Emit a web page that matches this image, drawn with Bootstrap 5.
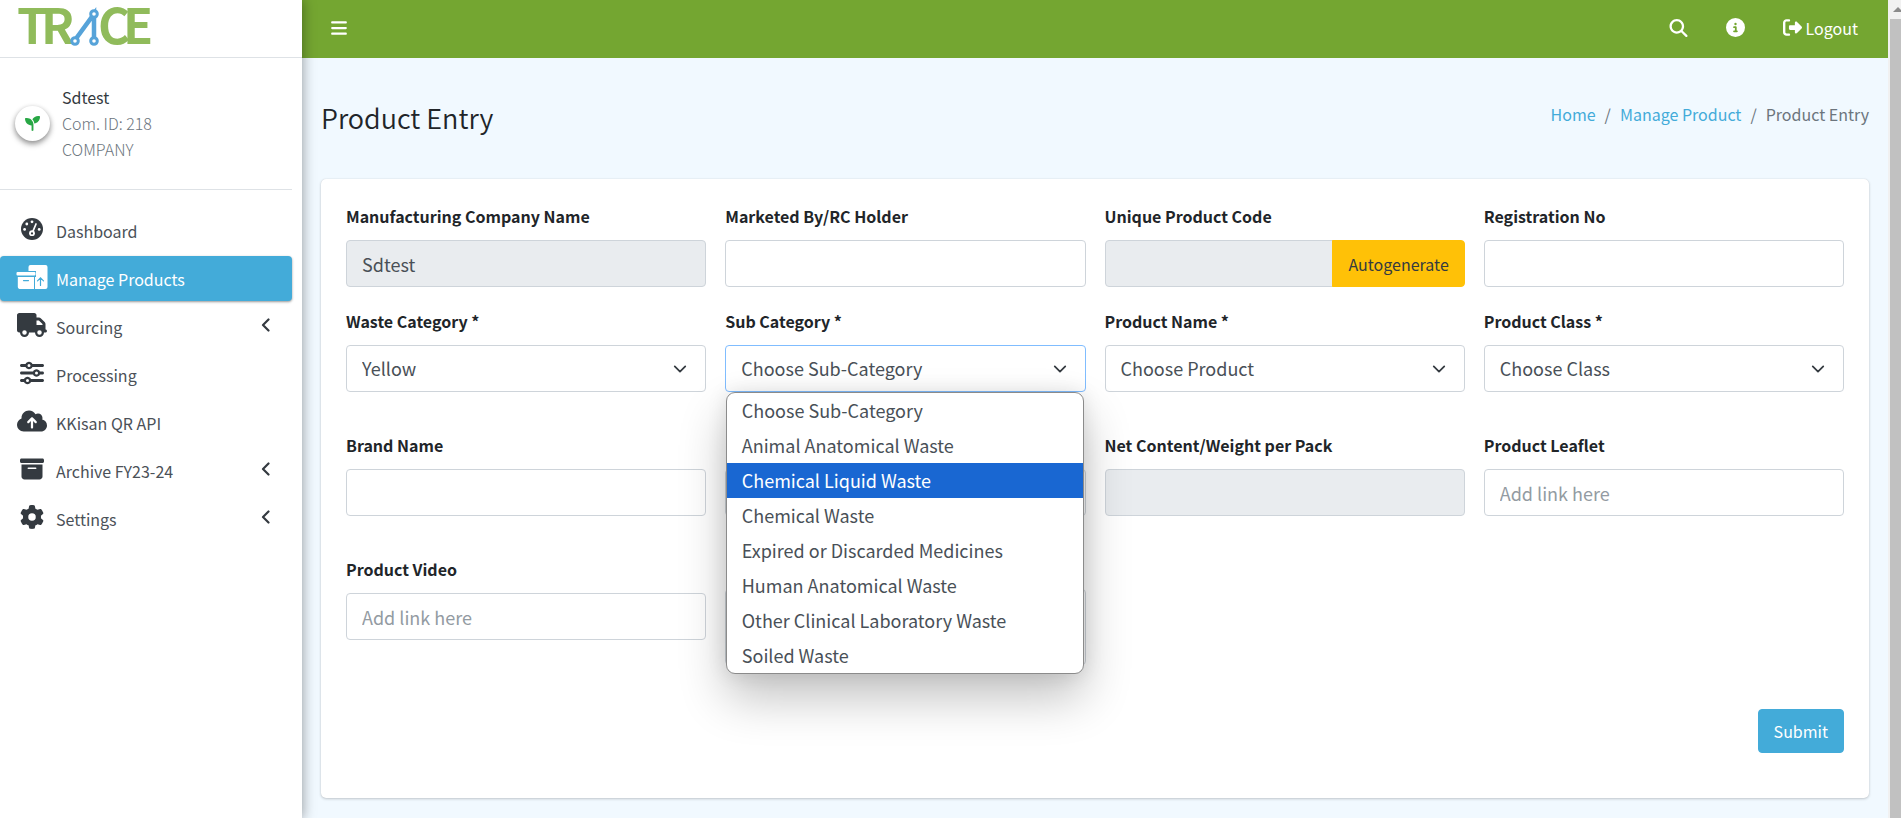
<!DOCTYPE html>
<html lang="en">
<head>
<meta charset="utf-8">
<meta name="viewport" content="width=device-width, initial-scale=1">
<title>Product Entry</title>
<link href="https://cdn.jsdelivr.net/npm/bootstrap@5.3.0/dist/css/bootstrap.min.css" rel="stylesheet">
<style>
  :root { --brand-blue: #43abd9; --brand-green: #74a631; }
  body { font-family: "Noto Sans CJK SC", "Open Sans", sans-serif; font-size: 16px; line-height: 26px; color: #212529; background: #f1f9ff; }
  svg { fill: currentColor; flex: none; }
  a { text-decoration: none; }

  .app-side { width: 302px; flex: none; background: #fff; box-shadow: 1px 0 12px rgba(0,0,0,.36); clip-path: inset(0 -20px 0 0); z-index: 3; color: #343a40; }
  .app-brand { height: 58px; padding: 0 16px; border-bottom: 1px solid #dee2e6; }
  .user-panel { margin: 26px 10px 0 0; padding: 0 0 27px 15px; border-bottom: 1px solid #dee2e6; }
  .user-text { font-weight: 300; color: #6c757d; }
  .avatar { width: 35px; height: 35px; color: #28a745; box-shadow: 0 3px 6px rgba(0,0,0,.3), 0 2px 5px rgba(0,0,0,.22); }
  .side-menu { margin: 18px 10px 0 0; gap: 3px; }
  .side-menu .nav-link { height: 45px; padding: 0 22px 0 16px; color: #4b5158; border-radius: 4px; }
  .side-menu .nav-link > svg { color: #343a40; margin-bottom: 3px; }
  .side-menu .nav-link .glyph { width: 32px; }
  .side-menu .active { background: var(--brand-blue); color: #fff; box-shadow: 0 1px 3px rgba(0,0,0,.24), 0 1px 2px rgba(0,0,0,.2); }
  .side-menu .nav-link.active, .side-menu .nav-link.active > svg { color: #fff; }

  .top-bar { height: 58px; background: var(--brand-green); padding: 0 30px 3px 28px; }
  .top-bar a, .top-bar button { color: #fff; }
  .top-links { gap: 38px; }
  .page-head { padding: 41px 19px 0 19px; height: 121px; }
  .page-head h1 { font-size: 27px; line-height: 38px; font-weight: 350; }
  .breadcrumb { --bs-breadcrumb-item-padding-x: 9px; --bs-breadcrumb-divider-color: #6c757d; line-height: 30px; }
  .breadcrumb a { color: var(--brand-blue); }
  .breadcrumb .active { color: #6c757d; }

  .entry-card { margin: 0 19px 21px; padding: 25px 25px 45px; background: #fff; border-radius: 5px; box-shadow: 0 0 1px rgba(0,0,0,.13), 0 1px 3px rgba(0,0,0,.2); }
  .entry-row { --bs-gutter-x: 19px; }
  .entry-card .form-label { display: block; font-weight: 700; line-height: 24px; margin-bottom: 12px; }
  .entry-card .form-control, .entry-card .form-select { height: 47px; padding: 8px 15px; font-size: 18px; line-height: 30px; color: #495057; border-color: #ced4da; border-radius: 4px; box-shadow: none; }
  .entry-card .form-control:disabled, .entry-card .form-control[readonly] { background: #e9ecef; }
  .entry-card .form-control::placeholder { color: #939ba2; }
  .entry-card .form-select { background-position: right 17px center; background-size: 16px 14px; padding-top: 7px; }
  .entry-card .form-select.is-open { border-color: #80bdff; }
  .entry-card .input-group .form-control { border-radius: 4px 0 0 4px; }
  .entry-card textarea.form-control { height: 76px; }
  .gap-row { margin-top: 22px; }
  .gap-wide { margin-top: 41px; }
  .btn { font-size: 16px; line-height: 26px; border-radius: 4px; }
  .btn-auto { background: #ffc107; color: #343a40; padding: 8px 15px; border: 1px solid #ffc107; }
  .btn-send, .btn-send:hover { background: var(--brand-blue); border-color: var(--brand-blue); color: #fff; padding: 8px 15px; }
  .actions { margin-top: 44px; }

  .option-list { position: absolute; top: 100%; left: 10px; right: 11px; z-index: 5; background: #fff; border: 1px solid #8b8b8b; border-radius: 9px; overflow: hidden; box-shadow: 0 24px 48px rgba(0,0,0,.24), 0 0 20px rgba(0,0,0,.1); font-size: 18px; line-height: 35px; color: #495057; }
  .option-list li { padding: 0 15px; height: 35px; }
  .option-list .picked { background: #1967d2; color: #fff; }

  .scroll-rail { width: 13px; flex: none; background: #f1f1f1; padding: 19px 0 0 2px; position: relative; }
  .scroll-rail i { display: block; height: 100%; background: #c1c1c1; }
  .scroll-rail svg { position: absolute; top: 7px; left: 5px; fill: #8b8b8b; }
</style>
</head>
<body>
<svg class="d-none" aria-hidden="true">
  <symbol id="i-bars" viewBox="0 0 448 512"><path d="M0 96C0 78.300 14.300 64 32 64H416c17.700 0 32 14.300 32 32s-14.300 32-32 32H32C14.300 128 0 113.700 0 96zM0 256c0-17.700 14.300-32 32-32H416c17.700 0 32 14.300 32 32s-14.300 32-32 32H32c-17.700 0-32-14.300-32-32zM448 416c0 17.700-14.300 32-32 32H32c-17.700 0-32-14.300-32-32s14.300-32 32-32H416c17.700 0 32 14.300 32 32z"/></symbol>
  <symbol id="i-search" viewBox="0 0 512 512"><path d="M416 208c0 45.900-14.900 88.300-40 122.700L502.600 457.400c12.500 12.500 12.500 32.800 0 45.300s-32.800 12.500-45.300 0L330.700 376c-34.400 25.200-76.800 40-122.700 40C93.100 416 0 322.900 0 208S93.100 0 208 0S416 93.100 416 208zM208 352a144 144 0 1 0 0-288 144 144 0 1 0 0 288z"/></symbol>
  <symbol id="i-info" viewBox="0 0 512 512"><path d="M256 512A256 256 0 1 0 256 0a256 256 0 1 0 0 512zM216 336h24V272H216c-13.300 0-24-10.700-24-24s10.700-24 24-24h48c13.300 0 24 10.700 24 24v88h8c13.300 0 24 10.700 24 24s-10.700 24-24 24H216c-13.300 0-24-10.700-24-24s10.700-24 24-24zm40-208a32 32 0 1 1 0 64 32 32 0 1 1 0-64z"/></symbol>
  <symbol id="i-exit" viewBox="0 0 512 512"><path d="M377.900 105.900L500.700 228.700c7.200 7.200 11.300 17.100 11.300 27.300s-4.100 20.100-11.300 27.300L377.900 406.100c-6.400 6.400-15 9.900-24 9.900c-18.700 0-33.900-15.200-33.900-33.900l0-62.100-128 0c-17.700 0-32-14.300-32-32l0-64c0-17.700 14.300-32 32-32l128 0 0-62.100c0-18.700 15.200-33.900 33.900-33.900c9 0 17.600 3.600 24 9.900zM160 96L96 96c-17.700 0-32 14.300-32 32l0 256c0 17.700 14.300 32 32 32l64 0c17.700 0 32 14.300 32 32s-14.300 32-32 32l-64 0c-53 0-96-43-96-96L0 128C0 75 43 32 96 32l64 0c17.700 0 32 14.300 32 32s-14.300 32-32 32z"/></symbol>
  <symbol id="i-plant" viewBox="0 0 512 512"><path d="M512 32c0 113.600-84.600 207.500-194.200 222c-7.100-53.400-30.600-101.600-65.300-139.300C290.800 46.300 364 0 448 0h32c17.700 0 32 14.300 32 32zM0 96C0 78.300 14.300 64 32 64H64c123.700 0 224 100.300 224 224v32V480c0 17.700-14.300 32-32 32s-32-14.300-32-32V320C100.300 320 0 219.700 0 96z"/></symbol>
  <symbol id="i-gauge" viewBox="0 0 22 22"><circle cx="11" cy="11" r="11"/><g fill="#fff"><circle cx="3.600" cy="11.400" r="1.400"/><circle cx="5.800" cy="6" r="1.400"/><circle cx="11" cy="3.800" r="1.400"/><circle cx="18.200" cy="11.400" r="1.400"/><circle cx="11" cy="15.200" r="2.900"/></g><path d="M11.400 14.600L15 6" stroke="#fff" stroke-width="1.700" stroke-linecap="round"/><circle cx="11" cy="15.400" r="1.100"/></symbol>
  <symbol id="i-boxes" viewBox="0 0 31 24"><path d="M14 0H29a2 2 0 0 1 2 2V22a2 2 0 0 1-2 2H18.500V12H19.500V6H12V2a2 2 0 0 1 2-2zM1 7H18a1 1 0 0 1 1 1V9.500a1 1 0 0 1-1 1H1a1 1 0 0 1-1-1V8a1 1 0 0 1 1-1zM1.300 12H17.500V24H3a2 2 0 0 1-1.700-2z"/><path d="M7 15.600H12M24 20.500V13M21 15.800L24 12.800L27 15.800" fill="none" stroke="#43abd9" stroke-width="1.200" stroke-linecap="round"/></symbol>
  <symbol id="i-truck" viewBox="0 0 640 512"><path d="M48 0C21.500 0 0 21.500 0 48V368c0 26.500 21.500 48 48 48H64c0 53 43 96 96 96s96-43 96-96H384c0 53 43 96 96 96s96-43 96-96h32c17.700 0 32-14.300 32-32s-14.300-32-32-32V288 256 237.300c0-17-6.700-33.300-18.700-45.300L512 114.700c-12-12-28.300-18.700-45.300-18.700H416V48c0-26.500-21.500-48-48-48H48zM416 160h50.700L544 237.300V256H416V160zM112 416a48 48 0 1 1 96 0 48 48 0 1 1-96 0zm368-48a48 48 0 1 1 0 96 48 48 0 1 1 0-96z"/></symbol>
  <symbol id="i-sliders" viewBox="0 0 512 512"><path d="M0 416c0 17.700 14.300 32 32 32l54.700 0c12.300 28.300 40.500 48 73.300 48s61-19.700 73.300-48L480 448c17.700 0 32-14.300 32-32s-14.300-32-32-32l-246.700 0c-12.300-28.300-40.500-48-73.300-48s-61 19.700-73.300 48L32 384c-17.700 0-32 14.300-32 32zm128 0a32 32 0 1 1 64 0 32 32 0 1 1 -64 0zM320 256a32 32 0 1 1 64 0 32 32 0 1 1 -64 0zm32-80c-32.800 0-61 19.700-73.300 48L32 224c-17.700 0-32 14.300-32 32s14.300 32 32 32l246.700 0c12.300 28.300 40.500 48 73.300 48s61-19.700 73.300-48l54.700 0c17.700 0 32-14.300 32-32s-14.300-32-32-32l-54.700 0c-12.300-28.300-40.500-48-73.300-48zM192 128a32 32 0 1 1 0-64 32 32 0 1 1 0 64zm73.300-64C253 35.700 224.800 16 192 16s-61 19.700-73.300 48L32 64C14.300 64 0 78.300 0 96s14.300 32 32 32l86.700 0c12.300 28.300 40.500 48 73.300 48s61-19.700 73.300-48L480 128c17.700 0 32-14.300 32-32s-14.300-32-32-32L265.300 64z"/></symbol>
  <symbol id="i-cloud" viewBox="0 0 640 512"><path d="M144 480C64.500 480 0 415.500 0 336c0-62.800 40.200-116.200 96.200-135.900c-.1-2.700-.2-5.400-.2-8.100c0-88.400 71.600-160 160-160c59.300 0 111 32.200 138.700 80.200C409.900 102 428.300 96 448 96c53 0 96 43 96 96c0 12.200-2.300 23.800-6.400 34.600C596 238.400 640 290.100 640 352c0 70.700-57.300 128-128 128H144zm79-217c-9.400 9.400-9.400 24.600 0 33.900s24.600 9.400 33.900 0l39-39V392c0 13.300 10.700 24 24 24s24-10.700 24-24V257.900l39 39c9.400 9.400 24.600 9.400 33.900 0s9.400-24.600 0-33.900l-80-80c-9.400-9.400-24.600-9.400-33.900 0l-80 80z"/></symbol>
  <symbol id="i-archive" viewBox="0 0 512 512"><path d="M32 32H480c17.700 0 32 14.300 32 32V96c0 17.700-14.300 32-32 32H32C14.300 128 0 113.700 0 96V64C0 46.300 14.300 32 32 32zm0 128H480V416c0 35.300-28.700 64-64 64H96c-35.300 0-64-28.700-64-64V160zm128 80c0 8.800 7.200 16 16 16H336c8.800 0 16-7.200 16-16s-7.200-16-16-16H176c-8.800 0-16 7.200-16 16z"/></symbol>
  <symbol id="i-gear" viewBox="0 0 512 512"><path d="M495.900 166.600c3.200 8.700 .5 18.400-6.400 24.600l-43.300 39.400c1.100 8.300 1.700 16.800 1.700 25.400s-.6 17.100-1.700 25.400l43.300 39.400c6.900 6.200 9.600 15.900 6.400 24.600c-4.400 11.900-9.700 23.300-15.800 34.300l-4.700 8.100c-6.600 11-14 21.400-22.100 31.200c-5.900 7.200-15.700 9.600-24.500 6.800l-55.700-17.700c-13.400 10.300-28.200 18.900-44 25.400l-12.500 57.100c-2 9.100-9 16.300-18.200 17.800c-13.800 2.300-28 3.500-42.500 3.500s-28.700-1.200-42.500-3.500c-9.200-1.500-16.200-8.700-18.200-17.800l-12.500-57.100c-15.800-6.500-30.600-15.100-44-25.400L83.100 425.900c-8.800 2.800-18.600 .3-24.500-6.800c-8.100-9.800-15.500-20.200-22.100-31.200l-4.700-8.100c-6.100-11-11.400-22.400-15.800-34.300c-3.200-8.700-.5-18.400 6.400-24.600l43.300-39.400C64.600 273.100 64 264.600 64 256s.6-17.100 1.700-25.400L22.400 191.200c-6.900-6.200-9.600-15.900-6.400-24.600c4.400-11.900 9.700-23.300 15.800-34.300l4.700-8.100c6.600-11 14-21.400 22.100-31.200c5.900-7.200 15.700-9.600 24.500-6.800l55.700 17.700c13.400-10.300 28.200-18.900 44-25.400l12.500-57.100c2-9.100 9-16.300 18.200-17.800C227.300 1.200 241.500 0 256 0s28.700 1.200 42.500 3.500c9.200 1.500 16.200 8.700 18.200 17.800l12.500 57.100c15.800 6.500 30.600 15.100 44 25.400l55.700-17.700c8.800-2.800 18.600-.3 24.500 6.800c8.100 9.800 15.500 20.200 22.100 31.200l4.700 8.100c6.100 11 11.400 22.400 15.800 34.300zM256 336a80 80 0 1 0 0-160 80 80 0 1 0 0 160z"/></symbol>
  <symbol id="i-left" viewBox="0 0 9 14"><path d="M7.500 1.500L2 7L7.500 12.500" fill="none" stroke="currentColor" stroke-width="2.200" stroke-linecap="round" stroke-linejoin="round"/></symbol>
</svg>

<div class="d-flex min-vh-100">
  <aside class="app-side">
    <a class="app-brand d-block" href="#" aria-label="TRACE home">
      <svg class="d-block" width="144" height="57" viewBox="0 0 144 57" font-family="'Liberation Sans Narrow', 'Noto Sans CJK SC', sans-serif" font-weight="700" font-size="49">
        <g fill="#90bb5b"><text x="1" y="44">T</text><text x="25" y="44">R</text><text x="82" y="44">C</text><text x="107" y="44">E</text></g>
        <g fill="#fff" stroke="#56a3d9"><path d="M59 40L78 14V40" fill="none" stroke-width="4.500"/><circle cx="59" cy="41" r="3.300" stroke-width="3"/><circle cx="78" cy="41" r="3.300" stroke-width="3"/><circle cx="78" cy="14" r="3.300" stroke-width="3"/></g>
      </svg>
    </a>
    <div class="user-panel d-flex align-items-center">
      <span class="avatar rounded-circle d-flex align-items-center justify-content-center bg-white"><svg width="15" height="15"><use href="#i-plant"/></svg></span>
      <div class="ps-2 ms-1">
        <div>Sdtest</div>
        <div class="user-text">Com. ID: 218</div>
        <div class="user-text">COMPANY</div>
      </div>
    </div>
    <nav class="side-menu nav flex-column flex-nowrap">
      <a class="nav-link d-flex align-items-center" href="#"><svg class="glyph" height="22"><use href="#i-gauge"/></svg><span class="ps-2">Dashboard</span></a>
      <a class="nav-link active d-flex align-items-center" href="#"><svg class="glyph" height="24"><use href="#i-boxes"/></svg><span class="ps-2">Manage Products</span></a>
      <a class="nav-link d-flex align-items-center" href="#"><svg class="glyph" height="24"><use href="#i-truck"/></svg><span class="ps-2">Sourcing</span><svg class="ms-auto" width="9" height="14"><use href="#i-left"/></svg></a>
      <a class="nav-link d-flex align-items-center" href="#"><svg class="glyph" height="24"><use href="#i-sliders"/></svg><span class="ps-2">Processing</span></a>
      <a class="nav-link d-flex align-items-center" href="#"><svg class="glyph" height="24"><use href="#i-cloud"/></svg><span class="ps-2">KKisan QR API</span></a>
      <a class="nav-link d-flex align-items-center" href="#"><svg class="glyph" height="24"><use href="#i-archive"/></svg><span class="ps-2">Archive FY23-24</span><svg class="ms-auto" width="9" height="14"><use href="#i-left"/></svg></a>
      <a class="nav-link d-flex align-items-center" href="#"><svg class="glyph" height="24"><use href="#i-gear"/></svg><span class="ps-2">Settings</span><svg class="ms-auto" width="9" height="14"><use href="#i-left"/></svg></a>
    </nav>
  </aside>

  <div class="flex-grow-1">
    <header class="top-bar d-flex align-items-center justify-content-between">
      <button type="button" class="btn p-0 border-0 d-flex" aria-label="Toggle menu"><svg width="18" height="18"><use href="#i-bars"/></svg></button>
      <div class="top-links d-flex align-items-center">
        <a href="#" class="d-flex" aria-label="Search"><svg width="19" height="18"><use href="#i-search"/></svg></a>
        <a href="#" class="d-flex" aria-label="Information"><svg width="19" height="19"><use href="#i-info"/></svg></a>
        <a href="#" class="d-flex align-items-center"><svg width="19" height="19"><use href="#i-exit"/></svg><span class="ms-1">Logout</span></a>
      </div>
    </header>

    <div class="page-head d-flex justify-content-between align-items-start">
      <h1 class="m-0">Product Entry</h1>
      <nav aria-label="breadcrumb">
        <ol class="breadcrumb m-0">
          <li class="breadcrumb-item"><a href="#">Home</a></li>
          <li class="breadcrumb-item"><a href="#">Manage Product</a></li>
          <li class="breadcrumb-item active" aria-current="page">Product Entry</li>
        </ol>
      </nav>
    </div>

    <form class="entry-card">
      <div class="row entry-row">
        <div class="col-3"><label class="form-label" for="company">Manufacturing Company Name</label><input id="company" class="form-control" value="Sdtest" readonly></div>
        <div class="col-3"><label class="form-label" for="holder">Marketed By/RC Holder</label><input id="holder" class="form-control"></div>
        <div class="col-3"><label class="form-label" for="code">Unique Product Code</label>
          <div class="input-group"><input id="code" class="form-control" readonly><button type="button" class="btn btn-auto">Autogenerate</button></div></div>
        <div class="col-3"><label class="form-label" for="regno">Registration No</label><input id="regno" class="form-control"></div>
      </div>
      <div class="row entry-row gap-row">
        <div class="col-3"><label class="form-label" for="waste">Waste Category *</label><select id="waste" class="form-select"><option>Yellow</option></select></div>
        <div class="col-3 position-relative"><label class="form-label" for="sub">Sub Category *</label><select id="sub" class="form-select is-open"><option>Choose Sub-Category</option></select>
          <ul class="option-list list-unstyled m-0" role="listbox" aria-label="Sub Category">
            <li role="option">Choose Sub-Category</li>
            <li role="option">Animal Anatomical Waste</li>
            <li role="option" class="picked" aria-selected="true">Chemical Liquid Waste</li>
            <li role="option">Chemical Waste</li>
            <li role="option">Expired or Discarded Medicines</li>
            <li role="option">Human Anatomical Waste</li>
            <li role="option">Other Clinical Laboratory Waste</li>
            <li role="option">Soiled Waste</li>
          </ul></div>
        <div class="col-3"><label class="form-label" for="product">Product Name *</label><select id="product" class="form-select"><option>Choose Product</option></select></div>
        <div class="col-3"><label class="form-label" for="class">Product Class *</label><select id="class" class="form-select"><option>Choose Class</option></select></div>
      </div>
      <div class="row entry-row gap-wide">
        <div class="col-3"><label class="form-label" for="brand">Brand Name</label><input id="brand" class="form-control"></div>
        <div class="col-3 d-flex align-items-end"><input class="form-control" aria-label="Pack"></div>
        <div class="col-3"><label class="form-label" for="net">Net Content/Weight per Pack</label><input id="net" class="form-control" readonly></div>
        <div class="col-3"><label class="form-label" for="leaflet">Product Leaflet</label><input id="leaflet" class="form-control" placeholder="Add link here"></div>
      </div>
      <div class="row entry-row gap-wide">
        <div class="col-3"><label class="form-label" for="video">Product Video</label><input id="video" class="form-control" placeholder="Add link here"></div>
        <div class="col-3 pt-4"><textarea class="form-control mt-2" aria-label="Remarks"></textarea></div>
      </div>
      <div class="actions text-end"><button type="submit" class="btn btn-send">Submit</button></div>
    </form>
  </div>

  <div class="scroll-rail" aria-hidden="true"><svg width="10" height="5" viewBox="0 0 10 5"><path d="M0 5L5 0L10 5z"/></svg><i></i></div>
</div>
<script src="https://cdn.jsdelivr.net/npm/bootstrap@5.3.0/dist/js/bootstrap.bundle.min.js"></script>
</body>
</html>
